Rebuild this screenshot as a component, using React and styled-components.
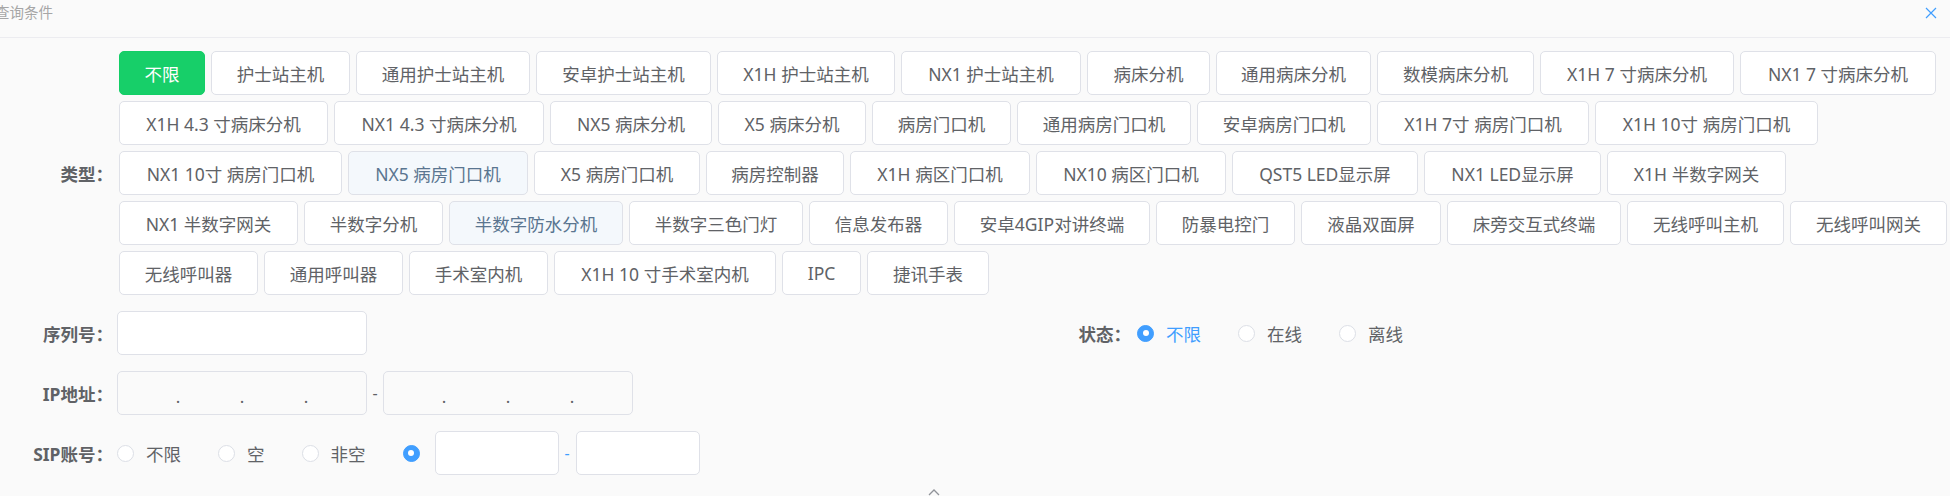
import React from 'react';
import styled, { createGlobalStyle } from 'styled-components';

const GlobalStyle = createGlobalStyle`
  html, body {
    margin: 0;
    padding: 0;
    background: #fafafa;
    overflow: hidden;
  }
  body {
    font-family: "Noto Sans", "Noto Sans CJK SC", sans-serif;
  }
`

const Panel = styled.div`
  width: 1950px;
  height: 496px;
  background: #fafafa;
  color: #606266;
  overflow: hidden;
`

const Header = styled.div`
  height: 38px;
  box-sizing: border-box;
  display: flex;
  justify-content: space-between;
  align-items: flex-start;
  padding: 3px 13px 0 0;
  border-bottom: 1px solid #ececf0;
  .title {
    margin-left: -5px;
    font-size: 14.5px;
    line-height: 19px;
    color: #a6a6a6;
  }
  svg {
    margin-top: 4px;
  }
`

const Body = styled.div`
  padding-top: 13px;
  display: flex;
  flex-direction: column;
  gap: 16px;
`

const Row = styled.div`
  display: flex;
  align-items: center;
`

const TwoCols = styled.div`
  display: grid;
  grid-template-columns: 1018px 1fr;
  align-items: center;
`

const Label = styled.div`
  width: 119px;
  flex-shrink: 0;
  box-sizing: border-box;
  padding-right: 6px;
  text-align: right;
  font-size: 17.5px;
  font-weight: 700;
  color: #606266;
  white-space: nowrap;
`

const Chips = styled.div`
  flex: 1;
  display: flex;
  flex-wrap: wrap;
  gap: 6px;
`

const Chip = styled.div`
  width: ${p => p.$w}px;
  height: 44px;
  box-sizing: border-box;
  display: flex;
  align-items: center;
  justify-content: center;
  border-radius: 5px;
  font-size: 17.5px;
  white-space: nowrap;
  border: 1px solid ${p => (p.$on ? '#13ce66' : '#dfe1e8')};
  background: ${p => (p.$on ? '#17cf69' : p.$hover ? '#f4f8fc' : '#ffffff')};
  color: ${p => (p.$on ? '#ffffff' : p.$hover ? '#5a7590' : '#606266')};
`

const Box = styled.div`
  width: ${p => p.$w}px;
  height: 44px;
  box-sizing: border-box;
  border: 1px solid #dfe1e8;
  border-radius: 5px;
  background: ${p => (p.$muted ? '#fafafa' : '#ffffff')};
  display: flex;
  align-items: center;
  margin-left: ${p => p.$ml || 0}px;
`

const IpSeg = styled.span`
  flex: 1;
`

const IpDot = styled.span`
  width: 8px;
  text-align: center;
  font-size: 17px;
  line-height: 1;
  padding-top: 6px;
  color: #606266;
`

const Dash = styled.span`
  width: ${p => p.$w}px;
  text-align: center;
  font-size: 16px;
  color: ${p => (p.$blue ? '#409eff' : '#606266')};
`

const Radios = styled.div`
  display: flex;
  align-items: center;
  margin-left: ${p => p.$ml || 0}px;
`

const RadioItem = styled.label`
  display: flex;
  align-items: center;
  margin-right: ${p => (p.$last ? 0 : 37)}px;
  font-size: 17.5px;
  color: ${p => (p.$on ? '#409eff' : '#606266')};
`

const Dot = styled.span`
  width: 17px;
  height: 17px;
  box-sizing: border-box;
  border-radius: 50%;
  border: 1px solid ${p => (p.$on ? '#409eff' : '#dcdfe6')};
  background: ${p => (p.$on ? '#409eff' : '#ffffff')};
  display: flex;
  align-items: center;
  justify-content: center;
  margin-right: ${p => (p.$bare ? 0 : 12)}px;
  &::after {
    content: '';
    width: 6px;
    height: 6px;
    border-radius: 50%;
    background: #ffffff;
    display: ${p => (p.$on ? 'block' : 'none')};
  }
`

const Footer = styled.div`
  padding: 12px 0 0 927px;
  line-height: 0;
`

const types = [
  ['不限', 86], ['护士站主机', 139], ['通用护士站主机', 174], ['安卓护士站主机', 175],
  ['X1H 护士站主机', 178], ['NX1 护士站主机', 180], ['病床分机', 123], ['通用病床分机', 155],
  ['数模病床分机', 157], ['X1H 7 寸病床分机', 194], ['NX1 7 寸病床分机', 196],
  ['X1H 4.3 寸病床分机', 209], ['NX1 4.3 寸病床分机', 210], ['NX5 病床分机', 162],
  ['X5 病床分机', 148], ['病房门口机', 139], ['通用病房门口机', 174], ['安卓病房门口机', 174],
  ['X1H 7寸 病房门口机', 212], ['X1H 10寸 病房门口机', 223],
  ['NX1 10寸 病房门口机', 223], ['NX5 病房门口机', 180], ['X5 病房门口机', 166],
  ['病房控制器', 138], ['X1H 病区门口机', 180], ['NX10 病区门口机', 190],
  ['QST5 LED显示屏', 186], ['NX1 LED显示屏', 177], ['X1H 半数字网关', 179],
  ['NX1 半数字网关', 179], ['半数字分机', 139], ['半数字防水分机', 174], ['半数字三色门灯', 174],
  ['信息发布器', 139], ['安卓4GIP对讲终端', 196], ['防暴电控门', 139], ['液晶双面屏', 140],
  ['床旁交互式终端', 174], ['无线呼叫主机', 157], ['无线呼叫网关', 157],
  ['无线呼叫器', 139], ['通用呼叫器', 139], ['手术室内机', 139], ['X1H 10 寸手术室内机', 222],
  ['IPC', 79], ['捷讯手表', 122],
]

const hovered = ['NX5 病房门口机', '半数字防水分机']

const IpBox = ({ ml }) => (
  <Box $w={250} $muted $ml={ml}>
    <IpSeg /><IpDot>.</IpDot><IpSeg /><IpDot>.</IpDot><IpSeg /><IpDot>.</IpDot><IpSeg />
  </Box>
)

const CloseIcon = () => (
  <svg width="12" height="12" viewBox="0 0 12 12">
    <path d="M1 1 L11 11 M11 1 L1 11" stroke="#409eff" strokeWidth="1.2" fill="none" />
  </svg>
)

export default function App() {
  return (
    <Panel>
      <GlobalStyle />
      <Header>
        <span className="title">查询条件</span>
        <CloseIcon />
      </Header>
      <Body>
        <Row>
          <Label>类型：</Label>
          <Chips>
            {types.map(([name, w], i) => (
              <Chip key={i} $w={w} $on={i === 0} $hover={hovered.includes(name)}>
                {name}
              </Chip>
            ))}
          </Chips>
        </Row>

        <TwoCols>
          <Row>
            <Label>序列号：</Label>
            <Box $w={250} $ml={-2} />
          </Row>
          <Row>
            <Label>状态：</Label>
            <Radios>
              <RadioItem $on><Dot $on />不限</RadioItem>
              <RadioItem><Dot />在线</RadioItem>
              <RadioItem $last><Dot />离线</RadioItem>
            </Radios>
          </Row>
        </TwoCols>

        <Row>
          <Label>IP地址：</Label>
          <IpBox ml={-2} />
          <Dash $w={16}>-</Dash>
          <IpBox />
        </Row>

        <Row>
          <Label>SIP账号：</Label>
          <Radios $ml={-2}>
            <RadioItem><Dot />不限</RadioItem>
            <RadioItem><Dot />空</RadioItem>
            <RadioItem><Dot />非空</RadioItem>
            <RadioItem $last><Dot $on $bare /></RadioItem>
          </Radios>
          <Box $w={124} $ml={15} />
          <Dash $w={17} $blue>-</Dash>
          <Box $w={124} />
        </Row>
      </Body>
      <Footer>
        <svg width="14" height="10" viewBox="0 0 14 10">
          <path d="M2 8 L7 3 L12 8" stroke="#909399" strokeWidth="1.3" fill="none" />
        </svg>
      </Footer>
    </Panel>
  );
}
